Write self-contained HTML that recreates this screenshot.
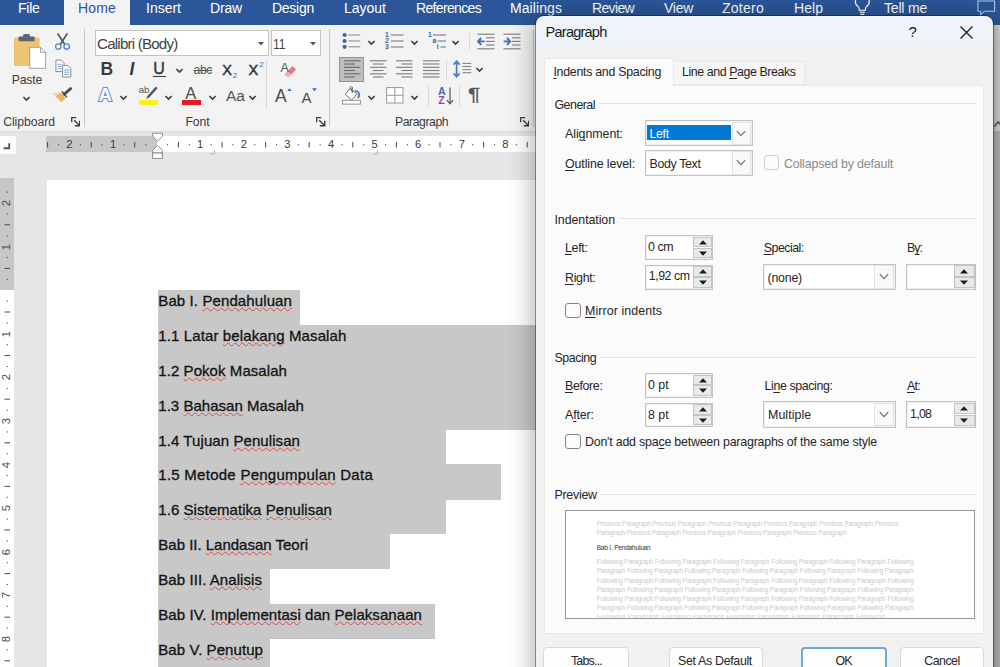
<!DOCTYPE html>
<html><head><meta charset="utf-8"><title>Paragraph</title>
<style>
*{box-sizing:border-box;margin:0;padding:0}
html,body{width:1000px;height:667px;overflow:hidden}
body{position:relative;background:#e6e6e6;font-family:"Liberation Sans",sans-serif;color:#262626}
body>div,body>svg,body>span{position:absolute}
.t{position:absolute;white-space:nowrap;line-height:1}
.t u{text-decoration-thickness:1px;text-underline-offset:1.5px}
.sq{text-decoration:underline wavy #dc4a4a 0.8px;text-underline-offset:0.6px;text-decoration-skip-ink:none}
</style></head><body>
<div style="left:0.00px;top:0.00px;width:1000.00px;height:130.50px;background:#f3f3f3"></div>
<div style="left:0.00px;top:0.00px;width:1000.00px;height:24.60px;background:#2b579a"></div>
<div style="left:64.00px;top:0.00px;width:66.00px;height:25.00px;background:#f3f3f3"></div>
<div style="left:84.00px;top:29.00px;width:1.00px;height:97.50px;background:#c8c8c8"></div>
<div style="left:328.50px;top:29.00px;width:1.00px;height:97.50px;background:#c8c8c8"></div>
<div style="left:533.00px;top:29.00px;width:1.00px;height:97.50px;background:#c8c8c8"></div>
<svg style="left:12.00px;top:32.00px;" width="36" height="38" viewBox="0 0 36 38"><rect x="2" y="5.5" width="25.6" height="28.4" rx="1.5" fill="#edc46f"/><rect x="6.5" y="4.6" width="16.2" height="4.6" rx="1" fill="#5b6673"/><rect x="11" y="1.9" width="7" height="4" rx="1.6" fill="#5b6673"/><path d="M17.8 15.3H28.5L33.6 20.4V36.3H17.8Z" fill="#fff" stroke="#9a9a9a" stroke-width="0.9"/><path d="M28.5 15.3V20.4H33.6" fill="none" stroke="#9a9a9a" stroke-width="0.9"/></svg>
<svg style="left:21.80px;top:96.00px;" width="9" height="6" viewBox="0 0 9 6"><path d="M1.4 1L4.5 4.1L7.6 1" stroke="#3a3a3a" stroke-width="1.55" fill="none"/></svg>
<svg style="left:54.00px;top:33.00px;" width="17" height="18" viewBox="0 0 17 18"><path d="M4 1L10.6 11.2M13 1L6.4 11.2" stroke="#595959" stroke-width="1.7" fill="none" stroke-linecap="round"/><circle cx="4.3" cy="13.6" r="2.7" fill="none" stroke="#5b8bc5" stroke-width="1.4"/><circle cx="12.7" cy="13.6" r="2.7" fill="none" stroke="#5b8bc5" stroke-width="1.4"/></svg>
<svg style="left:55.00px;top:59.00px;" width="17" height="19" viewBox="0 0 17 19"><path d="M0.9 1H6.2L9.2 4V12.6H0.9Z" fill="#fafafa" stroke="#7a8591" stroke-width="0.9"/><path d="M2.6 5.3H7.4M2.6 7.5H7.4M2.6 9.7H7.4" stroke="#8ea9c8" stroke-width="0.9"/><path d="M7.6 6.4H12.8L15.8 9.4V18H7.6Z" fill="#fafafa" stroke="#7a8591" stroke-width="0.9"/><path d="M9.3 11H14.2M9.3 13.2H14.2M9.3 15.4H14.2" stroke="#6f9bd1" stroke-width="0.9"/></svg>
<svg style="left:51.00px;top:87.00px;" width="22" height="17" viewBox="0 0 22 17"><path d="M13.3 7.2L19.6 1.6" stroke="#4d4d4d" stroke-width="2.8" stroke-linecap="round"/><path d="M11 4.6L15.8 10.2" stroke="#4d4d4d" stroke-width="1.6"/><path d="M9.8 5.4L14.6 11.2L10.6 15.2L4.2 9.2Z" fill="#ecb55d"/><path d="M1.5 6.2L9.8 5.4L4.2 9.2Z" fill="#f4d8a6"/></svg>
<svg style="left:70.70px;top:117.30px;" width="9.5" height="9.5" viewBox="0 0 9.5 9.5"><path d="M0.7 5.2V0.7H5.2" stroke="#3c3c3c" stroke-width="1.3" fill="none"/><path d="M3.2 3.2L8 8M8.7 3.8V8.7H3.8" stroke="#3c3c3c" stroke-width="1.45" fill="none"/></svg>
<div style="left:94.50px;top:29.50px;width:174.30px;height:26.50px;background:#fff;border:1px solid #c2c2c2"></div>
<div style="left:270.50px;top:29.50px;width:50.00px;height:26.50px;background:#fff;border:1px solid #c2c2c2"></div>
<svg style="left:258.00px;top:42.00px;" width="6" height="3.5" viewBox="0 0 6 3.5"><path d="M0 0H6L3 3.4Z" fill="#555"/></svg>
<svg style="left:309.50px;top:42.00px;" width="6" height="3.5" viewBox="0 0 6 3.5"><path d="M0 0H6L3 3.4Z" fill="#555"/></svg>
<div style="left:153.00px;top:76.00px;width:12.50px;height:1.30px;background:#3a3a3a"></div>
<svg style="left:175.00px;top:68.00px;" width="9" height="6" viewBox="0 0 9 6"><path d="M1.4 1L4.5 4.1L7.6 1" stroke="#3a3a3a" stroke-width="1.55" fill="none"/></svg>
<div style="left:266.00px;top:60.00px;width:1.00px;height:49.00px;background:#dadada"></div>
<svg style="left:283.00px;top:65.00px;" width="14" height="13" viewBox="0 0 14 13"><path d="M4.6 6.2L9.4 1L13 4.6L8.2 9.8Z" fill="#e8788a"/><path d="M1.2 9.4L4.6 6.2L8.2 9.8L5.2 12.6Z" fill="#f1a9b4"/></svg>
<svg style="left:119.30px;top:95.00px;" width="9" height="6" viewBox="0 0 9 6"><path d="M1.4 1L4.5 4.1L7.6 1" stroke="#3a3a3a" stroke-width="1.55" fill="none"/></svg>
<svg style="left:144.00px;top:85.00px;" width="15" height="16" viewBox="0 0 15 16"><path d="M11.8 1.5L13.6 3.2L5.2 12.4L2.2 14L3.6 10.8Z" fill="#555"/></svg>
<div style="left:138.50px;top:100.00px;width:19.50px;height:4.50px;background:#fdf01a"></div>
<svg style="left:164.30px;top:95.00px;" width="9" height="6" viewBox="0 0 9 6"><path d="M1.4 1L4.5 4.1L7.6 1" stroke="#3a3a3a" stroke-width="1.55" fill="none"/></svg>
<div style="left:182.00px;top:100.00px;width:19.00px;height:4.50px;background:#e01b22"></div>
<svg style="left:207.50px;top:95.00px;" width="9" height="6" viewBox="0 0 9 6"><path d="M1.4 1L4.5 4.1L7.6 1" stroke="#3a3a3a" stroke-width="1.55" fill="none"/></svg>
<svg style="left:247.50px;top:95.00px;" width="9" height="6" viewBox="0 0 9 6"><path d="M1.4 1L4.5 4.1L7.6 1" stroke="#3a3a3a" stroke-width="1.55" fill="none"/></svg>
<svg style="left:287.00px;top:87.50px;" width="5" height="3.5" viewBox="0 0 5 3.5"><path d="M0 3.3L2.5 0.2L5 3.3Z" fill="#2f6fc1"/></svg>
<svg style="left:312.00px;top:88.00px;" width="5" height="3.5" viewBox="0 0 5 3.5"><path d="M0 0.2L2.5 3.3L5 0.2Z" fill="#2f6fc1"/></svg>
<svg style="left:316.00px;top:117.30px;" width="9.5" height="9.5" viewBox="0 0 9.5 9.5"><path d="M0.7 5.2V0.7H5.2" stroke="#3c3c3c" stroke-width="1.3" fill="none"/><path d="M3.2 3.2L8 8M8.7 3.8V8.7H3.8" stroke="#3c3c3c" stroke-width="1.45" fill="none"/></svg>
<svg style="left:342.00px;top:32.00px;" width="19" height="17" viewBox="0 0 19 17"><circle cx="2.6" cy="3" r="2.1" fill="#46689a"/><circle cx="2.6" cy="9" r="2.1" fill="#46689a"/><circle cx="2.6" cy="14.8" r="2.1" fill="#46689a"/><path d="M6.6 3H18.2" stroke="#8c8c8c" stroke-width="1.1"/><path d="M6.6 9H18.2" stroke="#8c8c8c" stroke-width="1.1"/><path d="M6.6 14.8H18.2" stroke="#8c8c8c" stroke-width="1.1"/></svg>
<svg style="left:367.10px;top:39.50px;" width="9" height="6" viewBox="0 0 9 6"><path d="M1.4 1L4.5 4.1L7.6 1" stroke="#3a3a3a" stroke-width="1.55" fill="none"/></svg>
<svg style="left:385.00px;top:31.50px;" width="19" height="18" viewBox="0 0 19 18"><text x="0" y="5.2" font-family="Liberation Sans,sans-serif" font-size="6.8" font-weight="bold" fill="#3b6299">1</text><text x="0" y="11.2" font-family="Liberation Sans,sans-serif" font-size="6.8" font-weight="bold" fill="#3b6299">2</text><text x="0" y="17.2" font-family="Liberation Sans,sans-serif" font-size="6.8" font-weight="bold" fill="#3b6299">3</text><path d="M6 3H18.5" stroke="#7a7a7a" stroke-width="1.1"/><path d="M6 9H18.5" stroke="#7a7a7a" stroke-width="1.1"/><path d="M6 15H18.5" stroke="#7a7a7a" stroke-width="1.1"/></svg>
<svg style="left:410.30px;top:39.50px;" width="9" height="6" viewBox="0 0 9 6"><path d="M1.4 1L4.5 4.1L7.6 1" stroke="#3a3a3a" stroke-width="1.55" fill="none"/></svg>
<svg style="left:428.00px;top:31.50px;" width="19" height="18" viewBox="0 0 19 18"><text x="0" y="5.2" font-family="Liberation Sans,sans-serif" font-size="6.8" font-weight="bold" fill="#3b6299">1</text><text x="4.5" y="11.4" font-family="Liberation Sans,sans-serif" font-size="6.8" font-weight="bold" fill="#3b6299">a</text><text x="8.8" y="17.4" font-family="Liberation Sans,sans-serif" font-size="6.8" font-weight="bold" fill="#3b6299">i</text><path d="M5 3H18" stroke="#7a7a7a" stroke-width="1.1"/><path d="M9.5 9H18" stroke="#7a7a7a" stroke-width="1.1"/><path d="M12.5 15H18" stroke="#7a7a7a" stroke-width="1.1"/></svg>
<svg style="left:450.50px;top:39.50px;" width="9" height="6" viewBox="0 0 9 6"><path d="M1.4 1L4.5 4.1L7.6 1" stroke="#3a3a3a" stroke-width="1.55" fill="none"/></svg>
<div style="left:468.80px;top:33.00px;width:1.00px;height:16.50px;background:#dadada"></div>
<svg style="left:476.50px;top:32.60px;" width="18" height="17" viewBox="0 0 18 17"><path d="M0.5 1.2H17.5" stroke="#7a7a7a" stroke-width="1.1"/><path d="M0.5 15.8H17.5" stroke="#7a7a7a" stroke-width="1.1"/><path d="M9 4.8H17.5" stroke="#7a7a7a" stroke-width="1.1"/><path d="M9 8.4H17.5" stroke="#7a7a7a" stroke-width="1.1"/><path d="M9 12H17.5" stroke="#7a7a7a" stroke-width="1.1"/><path d="M7.6 8.4H1.2M4.2 5L1 8.4L4.2 11.8" stroke="#3f6fb5" stroke-width="1.9" fill="none"/></svg>
<svg style="left:502.50px;top:32.60px;" width="18" height="17" viewBox="0 0 18 17"><path d="M0.5 1.2H17.5" stroke="#7a7a7a" stroke-width="1.1"/><path d="M0.5 15.8H17.5" stroke="#7a7a7a" stroke-width="1.1"/><path d="M9 4.8H17.5" stroke="#7a7a7a" stroke-width="1.1"/><path d="M9 8.4H17.5" stroke="#7a7a7a" stroke-width="1.1"/><path d="M9 12H17.5" stroke="#7a7a7a" stroke-width="1.1"/><path d="M0.6 8.4H7M4 5L7.2 8.4L4 11.8" stroke="#3f6fb5" stroke-width="1.9" fill="none"/></svg>
<div style="left:339.30px;top:56.60px;width:25.00px;height:25.70px;background:#bfbfbf;border:1px solid #939393"></div>
<svg style="left:343.50px;top:60.00px;" width="17" height="18" viewBox="0 0 17 18"><path d="M0 0.8H16.5" stroke="#6a6a6a" stroke-width="1.1"/><path d="M0 7.3H16.5" stroke="#6a6a6a" stroke-width="1.1"/><path d="M0 13.8H16.5" stroke="#6a6a6a" stroke-width="1.1"/><path d="M0 4H11" stroke="#6a6a6a" stroke-width="1.1"/><path d="M0 10.5H11" stroke="#6a6a6a" stroke-width="1.1"/><path d="M0 17H11" stroke="#6a6a6a" stroke-width="1.1"/></svg>
<svg style="left:370.00px;top:60.00px;" width="17" height="18" viewBox="0 0 17 18"><path d="M0 0.8H16.5" stroke="#7a7a7a" stroke-width="1.1"/><path d="M0 7.3H16.5" stroke="#7a7a7a" stroke-width="1.1"/><path d="M0 13.8H16.5" stroke="#7a7a7a" stroke-width="1.1"/><path d="M3 4H13.5" stroke="#7a7a7a" stroke-width="1.1"/><path d="M3 10.5H13.5" stroke="#7a7a7a" stroke-width="1.1"/><path d="M3 17H13.5" stroke="#7a7a7a" stroke-width="1.1"/></svg>
<svg style="left:396.30px;top:60.00px;" width="17" height="18" viewBox="0 0 17 18"><path d="M0 0.8H16.5" stroke="#7a7a7a" stroke-width="1.1"/><path d="M0 7.3H16.5" stroke="#7a7a7a" stroke-width="1.1"/><path d="M0 13.8H16.5" stroke="#7a7a7a" stroke-width="1.1"/><path d="M5.5 4H16.5" stroke="#7a7a7a" stroke-width="1.1"/><path d="M5.5 10.5H16.5" stroke="#7a7a7a" stroke-width="1.1"/><path d="M5.5 17H16.5" stroke="#7a7a7a" stroke-width="1.1"/></svg>
<svg style="left:422.80px;top:60.00px;" width="17" height="18" viewBox="0 0 17 18"><path d="M0 0.8H16.5" stroke="#7a7a7a" stroke-width="1.1"/><path d="M0 4H16.5" stroke="#7a7a7a" stroke-width="1.1"/><path d="M0 7.3H16.5" stroke="#7a7a7a" stroke-width="1.1"/><path d="M0 10.5H16.5" stroke="#7a7a7a" stroke-width="1.1"/><path d="M0 13.8H16.5" stroke="#7a7a7a" stroke-width="1.1"/><path d="M0 17H16.5" stroke="#7a7a7a" stroke-width="1.1"/></svg>
<div style="left:445.50px;top:60.00px;width:1.00px;height:20.00px;background:#dadada"></div>
<svg style="left:452.00px;top:59.50px;" width="20" height="19" viewBox="0 0 20 19"><path d="M4.6 1.4V16.6M1.6 4.6L4.6 1.2L7.6 4.6M1.6 13.4L4.6 16.8L7.6 13.4" stroke="#4a7fc4" stroke-width="1.7" fill="none"/><path d="M10.5 3.4H19.3" stroke="#858585" stroke-width="1.1"/><path d="M10.5 6.5H19.3" stroke="#858585" stroke-width="1.1"/><path d="M10.5 9.6H19.3" stroke="#858585" stroke-width="1.1"/><path d="M10.5 12.7H19.3" stroke="#858585" stroke-width="1.1"/></svg>
<svg style="left:474.50px;top:67.00px;" width="9" height="6" viewBox="0 0 9 6"><path d="M1.4 1L4.5 4.1L7.6 1" stroke="#3a3a3a" stroke-width="1.55" fill="none"/></svg>
<svg style="left:342.00px;top:86.00px;" width="20" height="19" viewBox="0 0 20 19"><path d="M8 2.4L15.2 8L9.6 14L3.2 8.4Z" fill="#fff" stroke="#6f6f6f" stroke-width="1"/><circle cx="9.2" cy="1.9" r="1.4" fill="none" stroke="#6f6f6f" stroke-width="0.9"/><path d="M9.6 3L10.5 6.6" stroke="#444" stroke-width="1.3"/><path d="M13 4.6C15.8 5.2 17.6 7.4 17.2 9.4C17 10.6 16.4 11.4 16 12.2" fill="none" stroke="#4a7fc4" stroke-width="1.9"/><rect x="0.6" y="14.3" width="17.8" height="3.8" fill="#fff" stroke="#8a8a8a" stroke-width="0.9"/></svg>
<svg style="left:367.10px;top:95.00px;" width="9" height="6" viewBox="0 0 9 6"><path d="M1.4 1L4.5 4.1L7.6 1" stroke="#3a3a3a" stroke-width="1.55" fill="none"/></svg>
<svg style="left:386.00px;top:87.00px;" width="18" height="17" viewBox="0 0 18 17"><rect x="0.6" y="0.6" width="16.4" height="15.4" fill="#fff" stroke="#9a9a9a" stroke-width="1"/><path d="M8.8 0.6V16M0.6 8.3H17" stroke="#9a9a9a" stroke-width="1"/></svg>
<svg style="left:410.30px;top:95.00px;" width="9" height="6" viewBox="0 0 9 6"><path d="M1.4 1L4.5 4.1L7.6 1" stroke="#3a3a3a" stroke-width="1.55" fill="none"/></svg>
<div style="left:428.30px;top:86.00px;width:1.00px;height:20.00px;background:#dadada"></div>
<svg style="left:445.50px;top:87.00px;" width="8" height="18" viewBox="0 0 8 18"><path d="M4 0.5V16.5M1 13.2L4 16.8L7 13.2" stroke="#555" stroke-width="1.2" fill="none"/></svg>
<div style="left:459.20px;top:86.00px;width:1.00px;height:20.00px;background:#dadada"></div>
<svg style="left:519.60px;top:117.30px;" width="9.5" height="9.5" viewBox="0 0 9.5 9.5"><path d="M0.7 5.2V0.7H5.2" stroke="#3c3c3c" stroke-width="1.3" fill="none"/><path d="M3.2 3.2L8 8M8.7 3.8V8.7H3.8" stroke="#3c3c3c" stroke-width="1.45" fill="none"/></svg>
<svg style="left:853.00px;top:0.00px;" width="19" height="17" viewBox="0 0 19 17"><path d="M2.7 -0.4A6.8 6.8 0 0 0 5.5 7.1C6.1 7.9 6.3 9 6.3 10.4H12.3C12.3 9 12.5 7.9 13.1 7.1A6.8 6.8 0 0 0 15.9 -0.4M6.7 12.4H11.9M7.3 14.4H11.3" stroke="#f2f5fa" stroke-width="1.25" fill="none"/></svg>
<svg style="left:976.00px;top:0.00px;" width="24" height="16" viewBox="0 0 24 16"><path d="M1.9 1H18.6V11.2H8.2L4.6 14.8V11.2H1.9Z" stroke="#b4cbec" stroke-width="1.1" fill="none"/></svg>
<div style="left:0.00px;top:130.50px;width:1000.00px;height:536.50px;background:linear-gradient(#dcdcdc 0,#e6e6e6 2.5px)"></div>
<div style="left:0.00px;top:135.50px;width:15.50px;height:18.00px;background:#fdfdfd"></div>
<div style="left:46.00px;top:136.00px;width:111.00px;height:16.00px;background:#c6c6c6"></div>
<div style="left:157.00px;top:136.00px;width:843.00px;height:16.00px;background:#fff"></div>
<div style="left:47.00px;top:179.70px;width:953.00px;height:487.30px;background:#fff"></div>
<div style="left:0.00px;top:178.00px;width:14.00px;height:112.00px;background:#c6c6c6"></div>
<div style="left:0.00px;top:290.00px;width:14.00px;height:377.00px;background:#fff"></div>
<div style="left:158.00px;top:290.00px;width:142.00px;height:35.35px;background:#c8c8c8"></div>
<div style="left:158.00px;top:324.85px;width:402.00px;height:35.35px;background:#c8c8c8"></div>
<div style="left:158.00px;top:359.70px;width:402.00px;height:35.35px;background:#c8c8c8"></div>
<div style="left:158.00px;top:394.55px;width:402.00px;height:35.35px;background:#c8c8c8"></div>
<div style="left:158.00px;top:429.40px;width:288.00px;height:35.35px;background:#c8c8c8"></div>
<div style="left:158.00px;top:464.25px;width:343.00px;height:35.35px;background:#c8c8c8"></div>
<div style="left:158.00px;top:499.10px;width:288.00px;height:35.35px;background:#c8c8c8"></div>
<div style="left:158.00px;top:533.95px;width:232.00px;height:35.35px;background:#c8c8c8"></div>
<div style="left:158.00px;top:568.80px;width:112.00px;height:35.35px;background:#c8c8c8"></div>
<div style="left:158.00px;top:603.65px;width:277.00px;height:35.35px;background:#c8c8c8"></div>
<div style="left:158.00px;top:638.50px;width:112.00px;height:35.35px;background:#c8c8c8"></div>
<svg style="left:0;top:0" width="560" height="160" viewBox="0 0 560 160"><path d="M47.6 142V147.5" stroke="#4a4a4a" stroke-width="1"/><rect x="58.0" y="144.2" width="1.1" height="1.1" fill="#4a4a4a"/><rect x="79.8" y="144.2" width="1.1" height="1.1" fill="#4a4a4a"/><path d="M91.2 142V147.5" stroke="#4a4a4a" stroke-width="1"/><rect x="101.6" y="144.2" width="1.1" height="1.1" fill="#4a4a4a"/><rect x="123.4" y="144.2" width="1.1" height="1.1" fill="#4a4a4a"/><path d="M134.8 142V147.5" stroke="#4a4a4a" stroke-width="1"/><rect x="145.2" y="144.2" width="1.1" height="1.1" fill="#4a4a4a"/><rect x="167.0" y="144.2" width="1.1" height="1.1" fill="#4a4a4a"/><path d="M178.4 142V147.5" stroke="#4a4a4a" stroke-width="1"/><rect x="188.8" y="144.2" width="1.1" height="1.1" fill="#4a4a4a"/><rect x="210.6" y="144.2" width="1.1" height="1.1" fill="#4a4a4a"/><path d="M222.0 142V147.5" stroke="#4a4a4a" stroke-width="1"/><rect x="232.4" y="144.2" width="1.1" height="1.1" fill="#4a4a4a"/><rect x="254.2" y="144.2" width="1.1" height="1.1" fill="#4a4a4a"/><path d="M265.6 142V147.5" stroke="#4a4a4a" stroke-width="1"/><rect x="276.0" y="144.2" width="1.1" height="1.1" fill="#4a4a4a"/><rect x="297.8" y="144.2" width="1.1" height="1.1" fill="#4a4a4a"/><path d="M309.2 142V147.5" stroke="#4a4a4a" stroke-width="1"/><rect x="319.6" y="144.2" width="1.1" height="1.1" fill="#4a4a4a"/><rect x="341.4" y="144.2" width="1.1" height="1.1" fill="#4a4a4a"/><path d="M352.8 142V147.5" stroke="#4a4a4a" stroke-width="1"/><rect x="363.2" y="144.2" width="1.1" height="1.1" fill="#4a4a4a"/><rect x="385.0" y="144.2" width="1.1" height="1.1" fill="#4a4a4a"/><path d="M396.4 142V147.5" stroke="#4a4a4a" stroke-width="1"/><rect x="406.8" y="144.2" width="1.1" height="1.1" fill="#4a4a4a"/><rect x="428.6" y="144.2" width="1.1" height="1.1" fill="#4a4a4a"/><path d="M440.0 142V147.5" stroke="#4a4a4a" stroke-width="1"/><rect x="450.4" y="144.2" width="1.1" height="1.1" fill="#4a4a4a"/><rect x="472.2" y="144.2" width="1.1" height="1.1" fill="#4a4a4a"/><path d="M483.6 142V147.5" stroke="#4a4a4a" stroke-width="1"/><rect x="494.0" y="144.2" width="1.1" height="1.1" fill="#4a4a4a"/><rect x="515.8" y="144.2" width="1.1" height="1.1" fill="#4a4a4a"/><path d="M527.2 142V147.5" stroke="#4a4a4a" stroke-width="1"/><rect x="537.6" y="144.2" width="1.1" height="1.1" fill="#4a4a4a"/></svg>
<svg style="left:150.00px;top:131.00px;" width="15" height="29" viewBox="0 0 15 29"><path d="M2.6 2.2H12.4V5L7.5 10.6L2.6 5Z" fill="#fff" stroke="#858585" stroke-width="0.9"/><path d="M7.5 14.4L12.4 19.4V22H2.6V19.4Z" fill="#fff" stroke="#858585" stroke-width="0.9"/><rect x="2.6" y="22" width="9.8" height="5.4" fill="#fff" stroke="#858585" stroke-width="0.9"/></svg>
<svg style="left:3.00px;top:141.00px;" width="9" height="9" viewBox="0 0 9 9"><path d="M6.2 2.2V7.2H0.6" stroke="#5a5a5a" stroke-width="1.9" fill="none"/></svg>
<svg style="left:209.50px;top:149.50px;" width="6" height="5" viewBox="0 0 6 5"><path d="M4.5 0V3.8H0.5" stroke="#b5b5b5" stroke-width="1" fill="none"/></svg>
<svg style="left:372.50px;top:149.50px;" width="6" height="5" viewBox="0 0 6 5"><path d="M4.5 0V3.8H0.5" stroke="#b5b5b5" stroke-width="1" fill="none"/></svg>
<svg style="left:0;top:0" width="16" height="667" viewBox="0 0 16 667"><rect x="6.7" y="191.6" width="1.1" height="1.1" fill="#4a4a4a"/><rect x="6.7" y="213.4" width="1.1" height="1.1" fill="#4a4a4a"/><path d="M4.5 224.8H10" stroke="#4a4a4a" stroke-width="1"/><rect x="6.7" y="235.2" width="1.1" height="1.1" fill="#4a4a4a"/><rect x="6.7" y="257.0" width="1.1" height="1.1" fill="#4a4a4a"/><path d="M4.5 268.4H10" stroke="#4a4a4a" stroke-width="1"/><rect x="6.7" y="278.8" width="1.1" height="1.1" fill="#4a4a4a"/><rect x="6.7" y="300.6" width="1.1" height="1.1" fill="#4a4a4a"/><path d="M4.5 312.0H10" stroke="#4a4a4a" stroke-width="1"/><rect x="6.7" y="322.4" width="1.1" height="1.1" fill="#4a4a4a"/><rect x="6.7" y="344.2" width="1.1" height="1.1" fill="#4a4a4a"/><path d="M4.5 355.6H10" stroke="#4a4a4a" stroke-width="1"/><rect x="6.7" y="366.0" width="1.1" height="1.1" fill="#4a4a4a"/><rect x="6.7" y="387.8" width="1.1" height="1.1" fill="#4a4a4a"/><path d="M4.5 399.2H10" stroke="#4a4a4a" stroke-width="1"/><rect x="6.7" y="409.6" width="1.1" height="1.1" fill="#4a4a4a"/><rect x="6.7" y="431.4" width="1.1" height="1.1" fill="#4a4a4a"/><path d="M4.5 442.8H10" stroke="#4a4a4a" stroke-width="1"/><rect x="6.7" y="453.2" width="1.1" height="1.1" fill="#4a4a4a"/><rect x="6.7" y="475.0" width="1.1" height="1.1" fill="#4a4a4a"/><path d="M4.5 486.4H10" stroke="#4a4a4a" stroke-width="1"/><rect x="6.7" y="496.8" width="1.1" height="1.1" fill="#4a4a4a"/><rect x="6.7" y="518.6" width="1.1" height="1.1" fill="#4a4a4a"/><path d="M4.5 530.0H10" stroke="#4a4a4a" stroke-width="1"/><rect x="6.7" y="540.4" width="1.1" height="1.1" fill="#4a4a4a"/><rect x="6.7" y="562.2" width="1.1" height="1.1" fill="#4a4a4a"/><path d="M4.5 573.6H10" stroke="#4a4a4a" stroke-width="1"/><rect x="6.7" y="584.0" width="1.1" height="1.1" fill="#4a4a4a"/><rect x="6.7" y="605.8" width="1.1" height="1.1" fill="#4a4a4a"/><path d="M4.5 617.2H10" stroke="#4a4a4a" stroke-width="1"/><rect x="6.7" y="627.6" width="1.1" height="1.1" fill="#4a4a4a"/><rect x="6.7" y="649.4" width="1.1" height="1.1" fill="#4a4a4a"/><path d="M4.5 660.8H10" stroke="#4a4a4a" stroke-width="1"/></svg>
<span class="t" style="left:-2.8px;top:197.00px;width:20px;height:12px;text-align:center;font-size:11.2px;color:#4a4a4a;transform:rotate(-90deg);transform-origin:50% 50%">2</span>
<span class="t" style="left:-2.8px;top:240.60px;width:20px;height:12px;text-align:center;font-size:11.2px;color:#4a4a4a;transform:rotate(-90deg);transform-origin:50% 50%">1</span>
<span class="t" style="left:-2.8px;top:327.80px;width:20px;height:12px;text-align:center;font-size:11.2px;color:#4a4a4a;transform:rotate(-90deg);transform-origin:50% 50%">1</span>
<span class="t" style="left:-2.8px;top:371.40px;width:20px;height:12px;text-align:center;font-size:11.2px;color:#4a4a4a;transform:rotate(-90deg);transform-origin:50% 50%">2</span>
<span class="t" style="left:-2.8px;top:415.00px;width:20px;height:12px;text-align:center;font-size:11.2px;color:#4a4a4a;transform:rotate(-90deg);transform-origin:50% 50%">3</span>
<span class="t" style="left:-2.8px;top:458.60px;width:20px;height:12px;text-align:center;font-size:11.2px;color:#4a4a4a;transform:rotate(-90deg);transform-origin:50% 50%">4</span>
<span class="t" style="left:-2.8px;top:502.20px;width:20px;height:12px;text-align:center;font-size:11.2px;color:#4a4a4a;transform:rotate(-90deg);transform-origin:50% 50%">5</span>
<span class="t" style="left:-2.8px;top:545.80px;width:20px;height:12px;text-align:center;font-size:11.2px;color:#4a4a4a;transform:rotate(-90deg);transform-origin:50% 50%">6</span>
<span class="t" style="left:-2.8px;top:589.40px;width:20px;height:12px;text-align:center;font-size:11.2px;color:#4a4a4a;transform:rotate(-90deg);transform-origin:50% 50%">7</span>
<span class="t" style="left:-2.8px;top:633.00px;width:20px;height:12px;text-align:center;font-size:11.2px;color:#4a4a4a;transform:rotate(-90deg);transform-origin:50% 50%">8</span>
<span class="t" style="left:18.00px;top:0.75px;font-size:14.00px;color:#fff;letter-spacing:-0.266px;">File</span>
<span class="t" style="left:78.00px;top:0.75px;font-size:14.00px;color:#2b579a;letter-spacing:0.160px;">Home</span>
<span class="t" style="left:146.00px;top:0.75px;font-size:14.00px;color:#fff;letter-spacing:-0.003px;">Insert</span>
<span class="t" style="left:210.00px;top:0.75px;font-size:14.00px;color:#fff;letter-spacing:-0.168px;">Draw</span>
<span class="t" style="left:272.00px;top:0.75px;font-size:14.00px;color:#fff;letter-spacing:-0.266px;">Design</span>
<span class="t" style="left:344.00px;top:0.75px;font-size:14.00px;color:#fff;letter-spacing:-0.008px;">Layout</span>
<span class="t" style="left:416.00px;top:0.75px;font-size:14.00px;color:#fff;letter-spacing:-0.659px;">References</span>
<span class="t" style="left:510.00px;top:0.75px;font-size:14.00px;color:#fff;letter-spacing:0.080px;">Mailings</span>
<span class="t" style="left:592.00px;top:0.75px;font-size:14.00px;color:#fff;letter-spacing:-0.651px;">Review</span>
<span class="t" style="left:664.00px;top:0.75px;font-size:14.00px;color:#fff;letter-spacing:-0.273px;">View</span>
<span class="t" style="left:722.00px;top:0.75px;font-size:14.00px;color:#fff;letter-spacing:0.255px;">Zotero</span>
<span class="t" style="left:794.00px;top:0.75px;font-size:14.00px;color:#fff;letter-spacing:0.051px;">Help</span>
<span class="t" style="left:884.00px;top:0.75px;font-size:14.00px;color:#fff;letter-spacing:-0.194px;">Tell me</span>
<span class="t" style="left:11.70px;top:74.27px;font-size:12.20px;color:#3b3b3b;letter-spacing:-0.114px;">Paste</span>
<span class="t" style="left:3.20px;top:115.87px;font-size:12.20px;color:#3b3b3b;letter-spacing:-0.041px;">Clipboard</span>
<span class="t" style="left:97.00px;top:36.13px;font-size:15.20px;color:#444;letter-spacing:-0.821px;">Calibri (Body)</span>
<span class="t" style="left:273.20px;top:36.13px;font-size:15.20px;color:#444;transform:scaleX(0.8);transform-origin:0 0;">11</span>
<span class="t" style="left:100.50px;top:60.69px;font-size:17.50px;color:#3a3a3a;font-weight:bold;">B</span>
<span class="t" style="left:129.50px;top:60.69px;font-size:17.50px;color:#3a3a3a;font-style:italic;font-weight:bold;">I</span>
<span class="t" style="left:153.20px;top:61.06px;font-size:16.00px;color:#3a3a3a;-webkit-text-stroke:0.45px #3a3a3a;">U</span>
<span class="t" style="left:193.50px;top:64.17px;font-size:12.20px;color:#555;letter-spacing:-0.385px;text-decoration:line-through;">abc</span>
<span class="t" style="left:222.30px;top:63.23px;font-size:14.50px;color:#3a3a3a;-webkit-text-stroke:0.5px #3a3a3a;">X</span>
<span class="t" style="left:232.80px;top:71.73px;font-size:8.00px;color:#2f6fc1;">2</span>
<span class="t" style="left:248.60px;top:63.23px;font-size:14.50px;color:#3a3a3a;-webkit-text-stroke:0.5px #3a3a3a;">X</span>
<span class="t" style="left:259.30px;top:61.23px;font-size:8.00px;color:#2f6fc1;">2</span>
<span class="t" style="left:280.60px;top:61.92px;font-size:12.50px;color:#555;">A</span>
<span class="t" style="left:98.60px;top:85.64px;font-size:18.50px;color:#fff;-webkit-text-stroke:2px #5b93d6;font-weight:bold;paint-order:stroke fill;text-shadow:0 0 2px rgba(90,150,225,.55);">A</span>
<span class="t" style="left:138.80px;top:84.96px;font-size:9.50px;color:#555;">ab</span>
<span class="t" style="left:185.20px;top:84.53px;font-size:16.50px;color:#4a4a4a;">A</span>
<span class="t" style="left:226.00px;top:88.18px;font-size:15.50px;color:#555;letter-spacing:0.016px;">Aa</span>
<span class="t" style="left:275.00px;top:88.19px;font-size:17.50px;color:#4a4a4a;">A</span>
<span class="t" style="left:301.50px;top:90.30px;font-size:15.00px;color:#4a4a4a;">A</span>
<span class="t" style="left:185.50px;top:115.87px;font-size:12.20px;color:#3b3b3b;letter-spacing:-0.098px;">Font</span>
<span class="t" style="left:438.00px;top:86.41px;font-size:10.50px;color:#3f6fb5;font-weight:bold;">A</span>
<span class="t" style="left:438.30px;top:95.31px;font-size:10.50px;color:#8c4aa8;font-weight:bold;">Z</span>
<span class="t" style="left:467.60px;top:85.54px;font-size:18.50px;color:#585858;transform:scaleX(1.22);transform-origin:0 0;-webkit-text-stroke:0.3px #585858;">¶</span>
<span class="t" style="left:395.00px;top:115.87px;font-size:12.20px;color:#3b3b3b;letter-spacing:-0.414px;">Paragraph</span>
<span class="t" style="left:158.30px;top:293.10px;font-size:15.00px;color:#141414;letter-spacing:0.107px;-webkit-text-stroke:0.32px #141414;">Bab I. <span class="sq">Pendahuluan</span></span>
<span class="t" style="left:158.30px;top:327.95px;font-size:15.00px;color:#141414;letter-spacing:0.117px;-webkit-text-stroke:0.32px #141414;">1.1 Latar <span class="sq">belakang</span> Masalah</span>
<span class="t" style="left:158.30px;top:362.80px;font-size:15.00px;color:#141414;letter-spacing:0.064px;-webkit-text-stroke:0.32px #141414;">1.2 <span class="sq">Pokok</span> Masalah</span>
<span class="t" style="left:158.30px;top:397.65px;font-size:15.00px;color:#141414;letter-spacing:0.030px;-webkit-text-stroke:0.32px #141414;">1.3 <span class="sq">Bahasan</span> Masalah</span>
<span class="t" style="left:158.30px;top:432.50px;font-size:15.00px;color:#141414;letter-spacing:0.079px;-webkit-text-stroke:0.32px #141414;">1.4 Tujuan <span class="sq">Penulisan</span></span>
<span class="t" style="left:158.30px;top:467.35px;font-size:15.00px;color:#141414;letter-spacing:0.261px;-webkit-text-stroke:0.32px #141414;">1.5 Metode <span class="sq">Pengumpulan</span> Data</span>
<span class="t" style="left:158.30px;top:502.20px;font-size:15.00px;color:#141414;letter-spacing:0.043px;-webkit-text-stroke:0.32px #141414;">1.6 <span class="sq">Sistematika</span> <span class="sq">Penulisan</span></span>
<span class="t" style="left:158.30px;top:537.05px;font-size:15.00px;color:#141414;letter-spacing:-0.007px;-webkit-text-stroke:0.32px #141414;">Bab II. <span class="sq">Landasan</span> Teori</span>
<span class="t" style="left:158.30px;top:571.90px;font-size:15.00px;color:#141414;letter-spacing:0.067px;-webkit-text-stroke:0.32px #141414;">Bab III. <span class="sq">Analisis</span></span>
<span class="t" style="left:158.30px;top:606.75px;font-size:15.00px;color:#141414;letter-spacing:0.066px;-webkit-text-stroke:0.32px #141414;">Bab IV. <span class="sq">Implementasi</span> dan <span class="sq">Pelaksanaan</span></span>
<span class="t" style="left:158.30px;top:641.60px;font-size:15.00px;color:#141414;letter-spacing:0.070px;-webkit-text-stroke:0.32px #141414;">Bab V. <span class="sq">Penutup</span></span>
<span class="t" style="left:66.30px;top:139.32px;font-size:11.20px;color:#3a3a3a;">2</span>
<span class="t" style="left:109.90px;top:139.32px;font-size:11.20px;color:#3a3a3a;">1</span>
<span class="t" style="left:197.10px;top:139.32px;font-size:11.20px;color:#3a3a3a;">1</span>
<span class="t" style="left:240.70px;top:139.32px;font-size:11.20px;color:#3a3a3a;">2</span>
<span class="t" style="left:284.30px;top:139.32px;font-size:11.20px;color:#3a3a3a;">3</span>
<span class="t" style="left:327.90px;top:139.32px;font-size:11.20px;color:#3a3a3a;">4</span>
<span class="t" style="left:371.50px;top:139.32px;font-size:11.20px;color:#3a3a3a;">5</span>
<span class="t" style="left:415.10px;top:139.32px;font-size:11.20px;color:#3a3a3a;">6</span>
<span class="t" style="left:458.70px;top:139.32px;font-size:11.20px;color:#3a3a3a;">7</span>
<span class="t" style="left:502.30px;top:139.32px;font-size:11.20px;color:#3a3a3a;">8</span>
<div style="left:992.00px;top:24.60px;width:8.00px;height:106.40px;background:linear-gradient(90deg,#9a9a9a 0,#c6c6c6 2.5px,#d9d9d9 8px)"></div>
<div style="left:992.00px;top:131.00px;width:8.00px;height:536.00px;background:linear-gradient(90deg,#8e8e8e 0,#a9a9a9 2px,#bbbbbb 8px)"></div>
<div style="left:536.30px;top:16.30px;width:456.50px;height:683.70px;background:linear-gradient(#eef4f9 0,#eef4f9 26px,#f1f1f1 40px);border-radius:8px 8px 0 0;box-shadow:0 0 0 1px rgba(0,0,0,.36),0 3px 26px 3px rgba(0,0,0,.30)"></div>
<svg style="left:991.50px;top:119.50px;" width="12" height="8" viewBox="0 0 12 8"><path d="M2 6.4L6.2 2L10.4 6.4" stroke="#444" stroke-width="1.5" fill="none"/></svg>
<svg style="left:959.00px;top:25.00px;" width="15" height="15" viewBox="0 0 15 15"><path d="M1.5 1.5L13.5 13.5M13.5 1.5L1.5 13.5" stroke="#1b1b1b" stroke-width="1.3" fill="none"/></svg>
<div style="left:543.50px;top:84.50px;width:440.50px;height:549.00px;background:#fbfbfb;border:1px solid #eaeaea"></div>
<div style="left:673.00px;top:60.50px;width:132.00px;height:24.50px;background:#f6f6f6;border:1px solid #e9e9e9;border-left:none"></div>
<div style="left:543.50px;top:58.00px;width:130.00px;height:28.00px;background:#fbfbfb;border:1px solid #eaeaea;border-bottom:none"></div>
<div style="left:599.00px;top:103.00px;width:377.00px;height:1.00px;background:#e1e1e1"></div>
<div style="left:620.00px;top:218.00px;width:356.00px;height:1.00px;background:#e1e1e1"></div>
<div style="left:600.00px;top:356.50px;width:376.00px;height:1.00px;background:#e1e1e1"></div>
<div style="left:601.00px;top:493.50px;width:375.00px;height:1.00px;background:#e1e1e1"></div>
<div style="left:645.00px;top:120.00px;width:107.50px;height:26.25px;background:#fff;border:1px solid #c3c3c3;box-shadow:inset 0 0 0 1px #f0f0f0"></div>
<div style="left:731.50px;top:121.50px;width:19.50px;height:23.25px;background:#f9f9f9;border:1px solid #e2e2e2"></div>
<svg style="left:735.80px;top:129.72px;" width="10" height="7" viewBox="0 0 10 7"><path d="M0.8 1.2L5 5.6L9.2 1.2" stroke="#6c6c6c" stroke-width="1.15" fill="none"/></svg>
<div style="left:647.00px;top:125.20px;width:83.80px;height:15.00px;background:#0078d7"></div>
<div style="left:645.00px;top:149.50px;width:107.50px;height:26.75px;background:#fff;border:1px solid #c3c3c3;box-shadow:inset 0 0 0 1px #f0f0f0"></div>
<div style="left:731.50px;top:151.00px;width:19.50px;height:23.75px;background:#f9f9f9;border:1px solid #e2e2e2"></div>
<svg style="left:735.80px;top:159.47px;" width="10" height="7" viewBox="0 0 10 7"><path d="M0.8 1.2L5 5.6L9.2 1.2" stroke="#6c6c6c" stroke-width="1.15" fill="none"/></svg>
<div style="left:763.75px;top:155.00px;width:15.00px;height:15.00px;background:#fbfbfb;border:1px solid #cfcfcf;border-radius:3px"></div>
<div style="left:645.00px;top:235.00px;width:68.00px;height:25.00px;background:#fff;border:1px solid #c3c3c3;box-shadow:inset 0 0 0 1px #f0f0f0"></div>
<div style="left:693.00px;top:236.50px;width:19.00px;height:10.80px;background:#e9e9e9;border:1px solid #c4c4c4"></div>
<div style="left:693.00px;top:247.70px;width:19.00px;height:10.80px;background:#e9e9e9;border:1px solid #c4c4c4"></div>
<svg style="left:698.50px;top:239.70px;" width="8" height="5" viewBox="0 0 8 5"><path d="M0 4.6L4 0.2L8 4.6Z" fill="#1c1c1c"/></svg>
<svg style="left:698.50px;top:250.70px;" width="8" height="5" viewBox="0 0 8 5"><path d="M0 0.4L4 4.8L8 0.4Z" fill="#1c1c1c"/></svg>
<div style="left:645.00px;top:264.50px;width:68.00px;height:25.00px;background:#fff;border:1px solid #c3c3c3;box-shadow:inset 0 0 0 1px #f0f0f0"></div>
<div style="left:693.00px;top:266.00px;width:19.00px;height:10.80px;background:#e9e9e9;border:1px solid #c4c4c4"></div>
<div style="left:693.00px;top:277.20px;width:19.00px;height:10.80px;background:#e9e9e9;border:1px solid #c4c4c4"></div>
<svg style="left:698.50px;top:269.20px;" width="8" height="5" viewBox="0 0 8 5"><path d="M0 4.6L4 0.2L8 4.6Z" fill="#1c1c1c"/></svg>
<svg style="left:698.50px;top:280.20px;" width="8" height="5" viewBox="0 0 8 5"><path d="M0 0.4L4 4.8L8 0.4Z" fill="#1c1c1c"/></svg>
<div style="left:763.00px;top:263.75px;width:132.75px;height:26.25px;background:#fff;border:1px solid #c3c3c3;box-shadow:inset 0 0 0 1px #f0f0f0"></div>
<div style="left:874.25px;top:265.25px;width:20.00px;height:23.25px;background:#f9f9f9;border:1px solid #e2e2e2"></div>
<svg style="left:878.80px;top:273.48px;" width="10" height="7" viewBox="0 0 10 7"><path d="M0.8 1.2L5 5.6L9.2 1.2" stroke="#6c6c6c" stroke-width="1.15" fill="none"/></svg>
<div style="left:905.50px;top:263.75px;width:70.00px;height:26.25px;background:#fff;border:1px solid #c3c3c3;box-shadow:inset 0 0 0 1px #f0f0f0"></div>
<div style="left:954.00px;top:265.25px;width:20.50px;height:11.43px;background:#e9e9e9;border:1px solid #c4c4c4"></div>
<div style="left:954.00px;top:277.07px;width:20.50px;height:11.43px;background:#e9e9e9;border:1px solid #c4c4c4"></div>
<svg style="left:960.25px;top:268.76px;" width="8" height="5" viewBox="0 0 8 5"><path d="M0 4.6L4 0.2L8 4.6Z" fill="#1c1c1c"/></svg>
<svg style="left:960.25px;top:280.39px;" width="8" height="5" viewBox="0 0 8 5"><path d="M0 0.4L4 4.8L8 0.4Z" fill="#1c1c1c"/></svg>
<div style="left:565.00px;top:302.50px;width:15.50px;height:15.50px;background:#fbfbfb;border:1px solid #858585;border-radius:3px"></div>
<div style="left:645.00px;top:373.00px;width:68.00px;height:24.50px;background:#fff;border:1px solid #c3c3c3;box-shadow:inset 0 0 0 1px #f0f0f0"></div>
<div style="left:693.00px;top:374.50px;width:19.00px;height:10.55px;background:#e9e9e9;border:1px solid #c4c4c4"></div>
<div style="left:693.00px;top:385.45px;width:19.00px;height:10.55px;background:#e9e9e9;border:1px solid #c4c4c4"></div>
<svg style="left:698.50px;top:377.57px;" width="8" height="5" viewBox="0 0 8 5"><path d="M0 4.6L4 0.2L8 4.6Z" fill="#1c1c1c"/></svg>
<svg style="left:698.50px;top:388.32px;" width="8" height="5" viewBox="0 0 8 5"><path d="M0 0.4L4 4.8L8 0.4Z" fill="#1c1c1c"/></svg>
<div style="left:645.00px;top:402.50px;width:68.00px;height:24.50px;background:#fff;border:1px solid #c3c3c3;box-shadow:inset 0 0 0 1px #f0f0f0"></div>
<div style="left:693.00px;top:404.00px;width:19.00px;height:10.55px;background:#e9e9e9;border:1px solid #c4c4c4"></div>
<div style="left:693.00px;top:414.95px;width:19.00px;height:10.55px;background:#e9e9e9;border:1px solid #c4c4c4"></div>
<svg style="left:698.50px;top:407.07px;" width="8" height="5" viewBox="0 0 8 5"><path d="M0 4.6L4 0.2L8 4.6Z" fill="#1c1c1c"/></svg>
<svg style="left:698.50px;top:417.82px;" width="8" height="5" viewBox="0 0 8 5"><path d="M0 0.4L4 4.8L8 0.4Z" fill="#1c1c1c"/></svg>
<div style="left:763.00px;top:401.25px;width:132.75px;height:26.25px;background:#fff;border:1px solid #c3c3c3;box-shadow:inset 0 0 0 1px #f0f0f0"></div>
<div style="left:874.25px;top:402.75px;width:20.00px;height:23.25px;background:#f9f9f9;border:1px solid #e2e2e2"></div>
<svg style="left:878.80px;top:410.98px;" width="10" height="7" viewBox="0 0 10 7"><path d="M0.8 1.2L5 5.6L9.2 1.2" stroke="#6c6c6c" stroke-width="1.15" fill="none"/></svg>
<div style="left:905.50px;top:401.25px;width:70.00px;height:26.25px;background:#fff;border:1px solid #c3c3c3;box-shadow:inset 0 0 0 1px #f0f0f0"></div>
<div style="left:954.00px;top:402.75px;width:20.50px;height:11.43px;background:#e9e9e9;border:1px solid #c4c4c4"></div>
<div style="left:954.00px;top:414.57px;width:20.50px;height:11.43px;background:#e9e9e9;border:1px solid #c4c4c4"></div>
<svg style="left:960.25px;top:406.26px;" width="8" height="5" viewBox="0 0 8 5"><path d="M0 4.6L4 0.2L8 4.6Z" fill="#1c1c1c"/></svg>
<svg style="left:960.25px;top:417.89px;" width="8" height="5" viewBox="0 0 8 5"><path d="M0 0.4L4 4.8L8 0.4Z" fill="#1c1c1c"/></svg>
<div style="left:565.00px;top:434.00px;width:15.50px;height:15.00px;background:#fbfbfb;border:1px solid #858585;border-radius:3px"></div>
<div style="left:565.30px;top:510.00px;width:410.00px;height:108.50px;background:#fff;border:1.5px solid #979797;overflow:hidden"></div>
<div style="left:543.40px;top:647.00px;width:86.00px;height:43.00px;background:#fdfdfd;border:1px solid #d9d9d9;border-radius:4px"></div>
<div style="left:668.60px;top:647.00px;width:94.00px;height:43.00px;background:#fdfdfd;border:1px solid #d9d9d9;border-radius:4px"></div>
<div style="left:800.60px;top:647.00px;width:86.60px;height:43.00px;background:#fdfdfd;border:2px solid #6aaade;border-radius:4px"></div>
<div style="left:899.60px;top:647.00px;width:84.80px;height:43.00px;background:#fdfdfd;border:1px solid #d9d9d9;border-radius:4px"></div>
<span class="t" style="left:545.60px;top:24.64px;font-size:14.60px;color:#1b1b1b;letter-spacing:-0.806px;">Paragraph</span>
<span class="t" style="left:908.50px;top:24.30px;font-size:15.00px;color:#1b1b1b;">?</span>
<span class="t" style="left:553.40px;top:66.10px;font-size:12.40px;color:#262626;letter-spacing:-0.284px;"><u>I</u>ndents and Spacing</span>
<span class="t" style="left:682.00px;top:66.30px;font-size:12.40px;color:#262626;letter-spacing:-0.422px;">Line and <u>P</u>age Breaks</span>
<span class="t" style="left:554.50px;top:98.90px;font-size:12.40px;color:#262626;letter-spacing:-0.513px;">General</span>
<span class="t" style="left:554.50px;top:214.00px;font-size:12.40px;color:#262626;letter-spacing:-0.075px;">Indentation</span>
<span class="t" style="left:554.50px;top:352.00px;font-size:12.40px;color:#262626;letter-spacing:-0.433px;">Spacing</span>
<span class="t" style="left:554.50px;top:489.00px;font-size:12.40px;color:#262626;letter-spacing:-0.268px;">Preview</span>
<span class="t" style="left:565.00px;top:127.75px;font-size:12.40px;color:#262626;letter-spacing:-0.058px;">Ali<u>g</u>nment:</span>
<span class="t" style="left:649.50px;top:127.70px;font-size:12.40px;color:#fff;letter-spacing:-0.355px;">Left</span>
<span class="t" style="left:565.00px;top:157.75px;font-size:12.40px;color:#262626;letter-spacing:-0.117px;"><u>O</u>utline level:</span>
<span class="t" style="left:649.50px;top:157.70px;font-size:12.40px;color:#262626;letter-spacing:-0.354px;">Body Text</span>
<span class="t" style="left:784.00px;top:157.50px;font-size:12.40px;color:#8a8a8a;letter-spacing:-0.164px;">Collapsed by default</span>
<span class="t" style="left:565.00px;top:242.00px;font-size:12.40px;color:#262626;letter-spacing:-0.325px;"><u>L</u>eft:</span>
<span class="t" style="left:648.00px;top:240.50px;font-size:12.40px;color:#262626;letter-spacing:-0.465px;">0 cm</span>
<span class="t" style="left:565.00px;top:272.00px;font-size:12.40px;color:#262626;letter-spacing:-0.312px;"><u>R</u>ight:</span>
<span class="t" style="left:648.75px;top:270.20px;font-size:12.40px;color:#262626;letter-spacing:-0.475px;">1,92 cm</span>
<span class="t" style="left:763.75px;top:242.00px;font-size:12.40px;color:#262626;letter-spacing:-0.512px;"><u>S</u>pecial:</span>
<span class="t" style="left:907.00px;top:242.00px;font-size:12.40px;color:#262626;letter-spacing:-0.974px;">B<u>y</u>:</span>
<span class="t" style="left:767.50px;top:271.50px;font-size:12.40px;color:#262626;letter-spacing:-0.221px;">(none)</span>
<span class="t" style="left:585.00px;top:304.80px;font-size:12.40px;color:#262626;letter-spacing:0.089px;"><u>M</u>irror indents</span>
<span class="t" style="left:565.00px;top:379.50px;font-size:12.40px;color:#262626;letter-spacing:-0.350px;"><u>B</u>efore:</span>
<span class="t" style="left:648.00px;top:378.80px;font-size:12.40px;color:#262626;letter-spacing:0.020px;">0 pt</span>
<span class="t" style="left:565.00px;top:409.10px;font-size:12.40px;color:#262626;letter-spacing:-0.146px;">A<u>f</u>ter:</span>
<span class="t" style="left:648.00px;top:408.70px;font-size:12.40px;color:#262626;letter-spacing:0.020px;">8 pt</span>
<span class="t" style="left:764.50px;top:379.50px;font-size:12.40px;color:#262626;letter-spacing:-0.388px;">Li<u>n</u>e spacing:</span>
<span class="t" style="left:907.00px;top:379.50px;font-size:12.40px;color:#262626;letter-spacing:-0.719px;"><u>A</u>t:</span>
<span class="t" style="left:768.00px;top:409.30px;font-size:12.40px;color:#262626;letter-spacing:0.068px;">Multiple</span>
<span class="t" style="left:910.00px;top:407.70px;font-size:12.40px;color:#262626;letter-spacing:-0.719px;">1,08</span>
<span class="t" style="left:585.00px;top:436.00px;font-size:12.40px;color:#262626;letter-spacing:-0.206px;">Don't add spa<u>c</u>e between paragraphs of the same style</span>
<span class="t" style="left:596.70px;top:520.51px;font-size:6.60px;color:#cbcbcb;letter-spacing:-0.237px;">Previous Paragraph Previous Paragraph Previous Paragraph Previous Paragraph Previous Paragraph Previous</span>
<span class="t" style="left:596.70px;top:529.51px;font-size:6.60px;color:#cbcbcb;letter-spacing:-0.250px;">Paragraph Previous Paragraph Previous Paragraph Previous Paragraph Previous Paragraph</span>
<span class="t" style="left:596.70px;top:544.51px;font-size:6.60px;color:#333;letter-spacing:-0.230px;">Bab I. Pendahuluan</span>
<span class="t" style="left:596.70px;top:559.21px;font-size:6.60px;color:#cbcbcb;letter-spacing:-0.208px;">Following Paragraph Following Paragraph Following Paragraph Following Paragraph Following Paragraph Following</span>
<span class="t" style="left:596.70px;top:568.41px;font-size:6.60px;color:#cbcbcb;letter-spacing:-0.235px;">Paragraph Following Paragraph Following Paragraph Following Paragraph Following Paragraph Following Paragraph</span>
<span class="t" style="left:596.70px;top:577.61px;font-size:6.60px;color:#cbcbcb;letter-spacing:-0.208px;">Following Paragraph Following Paragraph Following Paragraph Following Paragraph Following Paragraph Following</span>
<span class="t" style="left:596.70px;top:586.81px;font-size:6.60px;color:#cbcbcb;letter-spacing:-0.235px;">Paragraph Following Paragraph Following Paragraph Following Paragraph Following Paragraph Following Paragraph</span>
<span class="t" style="left:596.70px;top:596.01px;font-size:6.60px;color:#cbcbcb;letter-spacing:-0.208px;">Following Paragraph Following Paragraph Following Paragraph Following Paragraph Following Paragraph Following</span>
<span class="t" style="left:596.70px;top:605.21px;font-size:6.60px;color:#cbcbcb;letter-spacing:-0.235px;">Paragraph Following Paragraph Following Paragraph Following Paragraph Following Paragraph Following Paragraph</span>
<span class="t" style="left:596.70px;top:614.41px;font-size:6.60px;color:#cbcbcb;letter-spacing:0.126px;clip-path:inset(0 0 50% 0);">Following Paragraph Following Paragraph Following Paragraph Following Paragraph Following</span>
<span class="t" style="left:570.90px;top:654.50px;font-size:12.40px;color:#262626;letter-spacing:-0.774px;"><u>T</u>abs...</span>
<span class="t" style="left:678.00px;top:654.50px;font-size:12.40px;color:#262626;letter-spacing:-0.324px;">Set As <u>D</u>efault</span>
<span class="t" style="left:835.50px;top:654.50px;font-size:12.40px;color:#262626;letter-spacing:-0.953px;">OK</span>
<span class="t" style="left:924.30px;top:654.50px;font-size:12.40px;color:#262626;letter-spacing:-0.546px;">Cancel</span>
</body></html>
